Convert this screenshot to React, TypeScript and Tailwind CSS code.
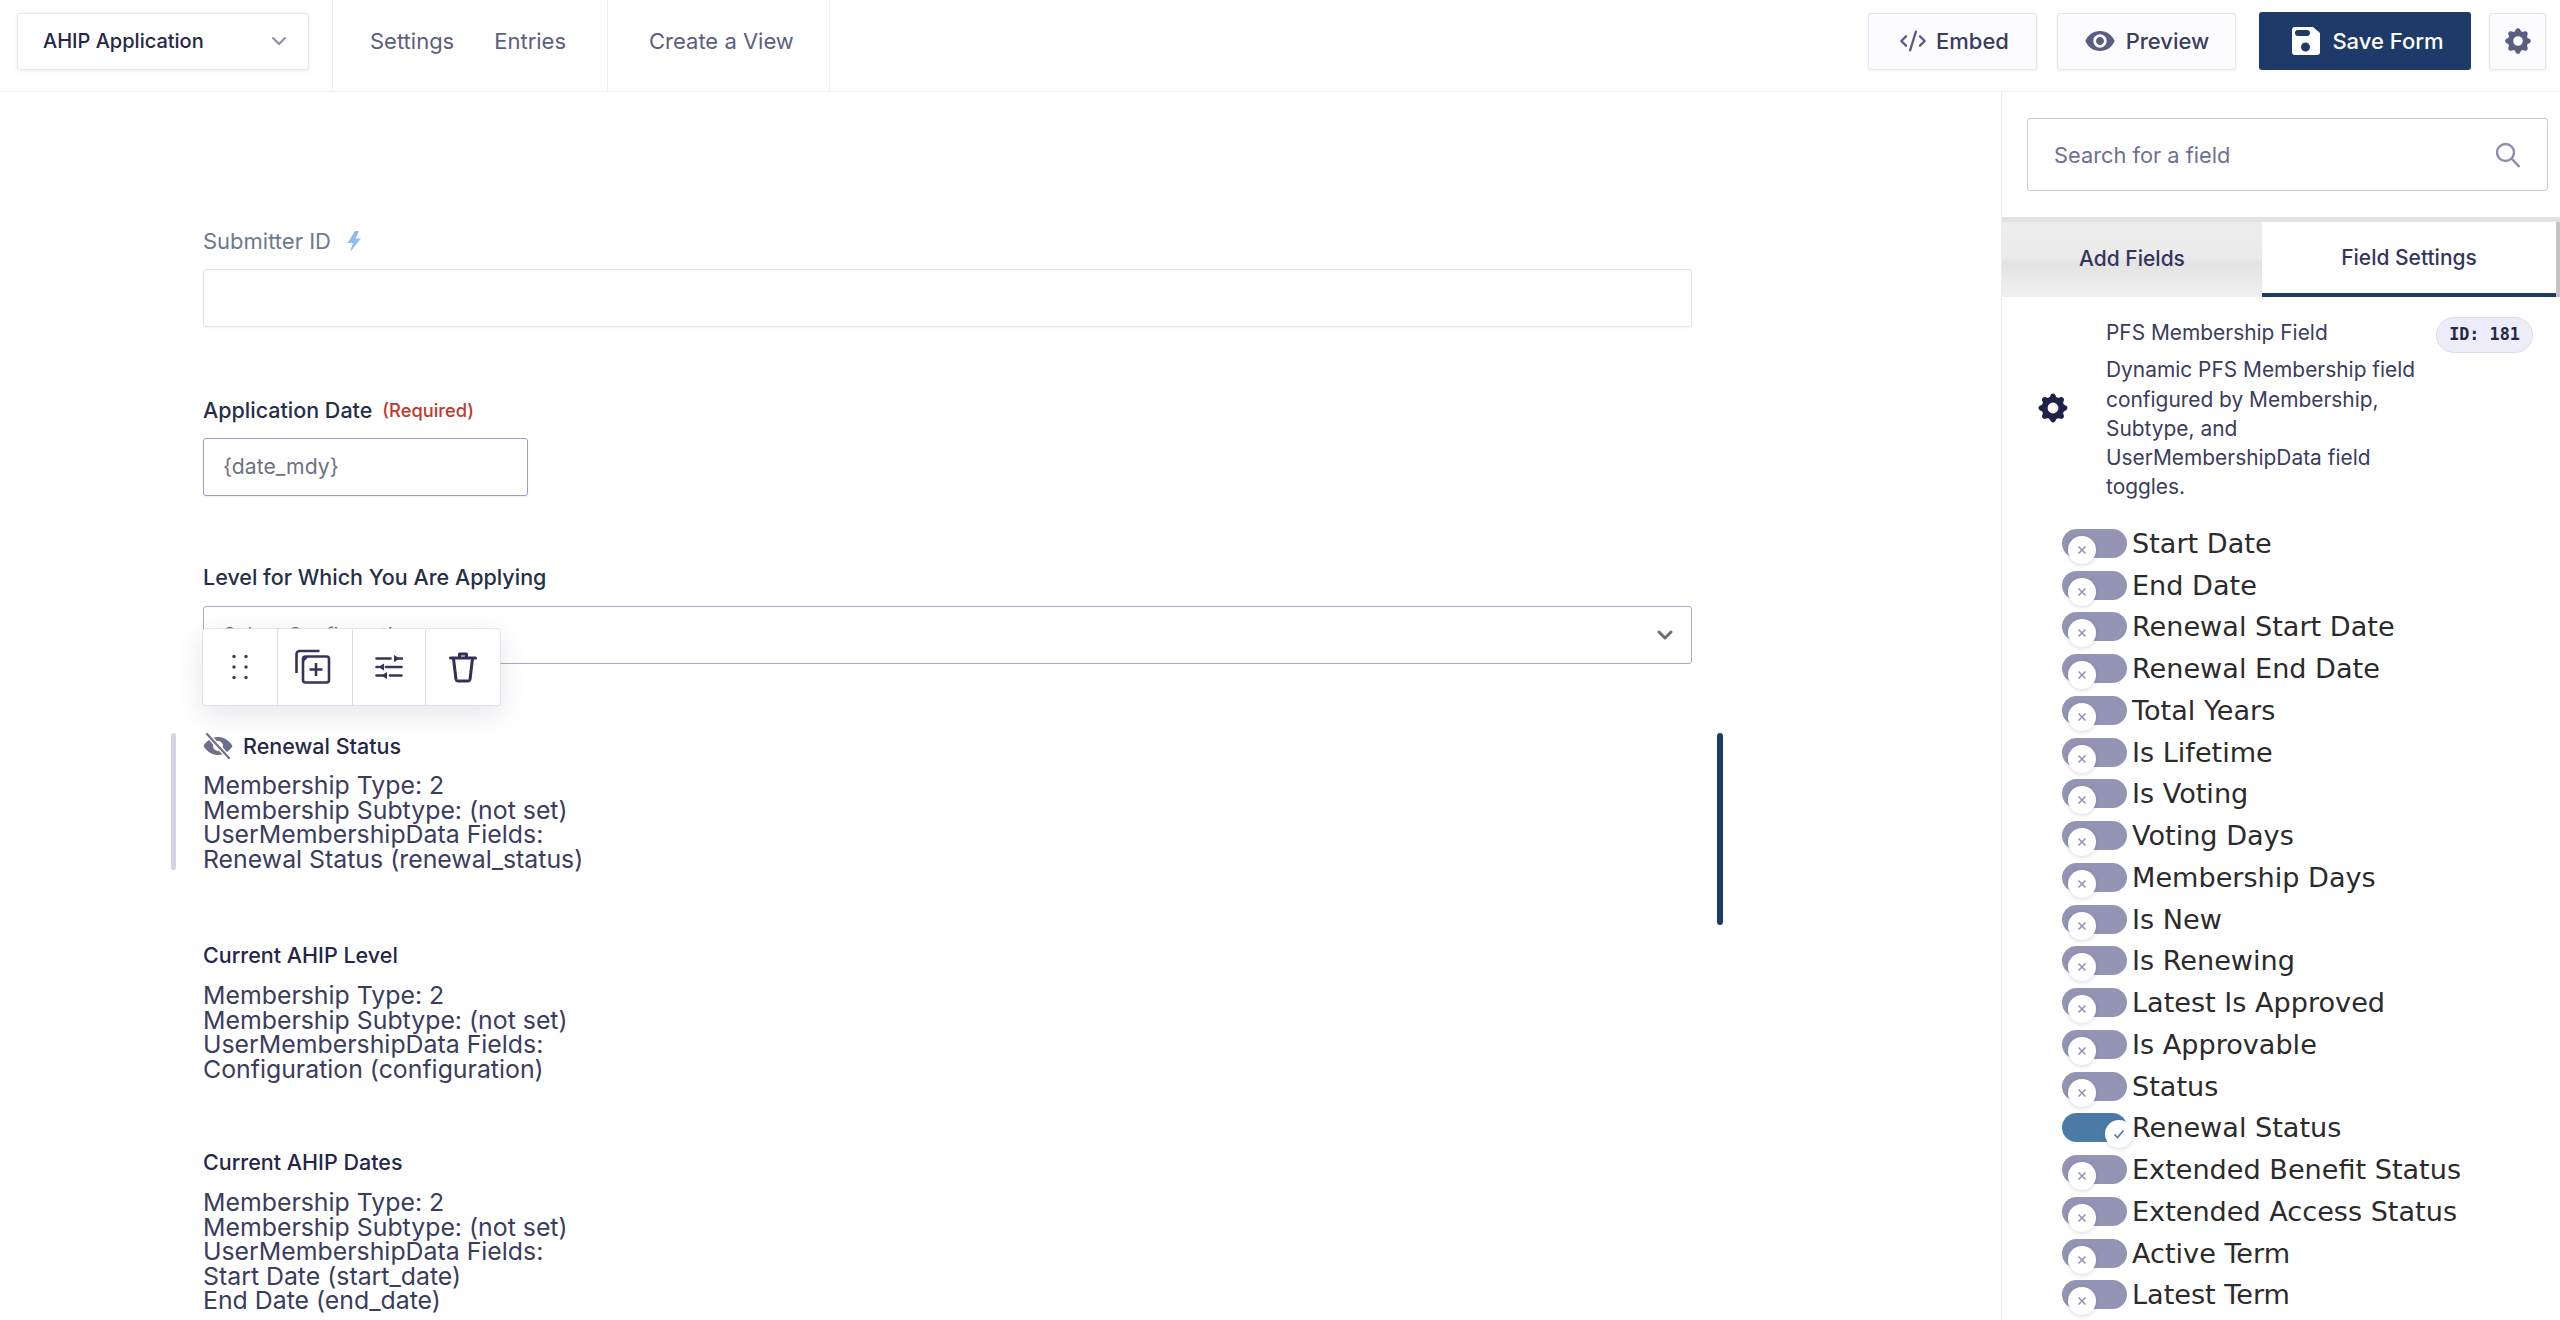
import React from "react";
import { ChevronDown, CodeXml } from "lucide-react";
import { MdVisibility } from "react-icons/md";
import { HiCog } from "react-icons/hi";

const toggles = ["Start Date","End Date","Renewal Start Date","Renewal End Date","Total Years","Is Lifetime","Is Voting","Voting Days","Membership Days","Is New","Is Renewing","Latest Is Approved","Is Approvable","Status","Renewal Status","Extended Benefit Status","Extended Access Status","Active Term","Latest Term"];

function Toggle({ label }: { label: string }) {
  const on = label === "Renewal Status";
  return (
    <div className="flex h-[41.75px] shrink-0 items-start pl-[60px]">
      <div className={`relative h-[29px] w-[65px] shrink-0 rounded-full ${on ? "bg-[#4a7ba6]" : "bg-[#9494b4]"}`}>
        <div className={`absolute top-[7px] flex h-[28px] w-[28px] items-center justify-center rounded-full bg-white shadow-[0_1px_4px_rgba(60,60,100,0.2)] ${on ? "left-[43px]" : "left-[6px]"}`}>
          {on ? (
            <svg width="14" height="14" viewBox="0 0 14 14" fill="none" stroke="#4a7ba6" strokeWidth="1.6"><path d="M2.5 7.5 5.5 10.5 11.5 3.5" /></svg>
          ) : (
            <svg width="12" height="12" viewBox="0 0 12 12" fill="none" stroke="#9494b4" strokeWidth="1.6"><path d="M2.5 2.5 9.5 9.5M9.5 2.5 2.5 9.5" /></svg>
          )}
        </div>
      </div>
      <span className="ml-[5px] whitespace-nowrap font-['DejaVu_Sans'] text-[27.1px] leading-[29px] text-[#2b2b2b]">{label}</span>
    </div>
  );
}

function Info({ title, lines, className = "" }: { title: string; lines: string[]; className?: string }) {
  return (
    <div className={className}>
      <div className="text-[21.5px] leading-[28px] font-medium text-[#242748]">{title}</div>
      <div className="mt-[14px] text-[24.85px] leading-[24.5px] text-[#3a3d5c]">
        {lines.map((l) => <div key={l}>{l}</div>)}
      </div>
    </div>
  );
}

const mt = "Membership Type: 2";
const ms = "Membership Subtype: (not set)";
const um = "UserMembershipData Fields:";

export default function App() {
  return (
    <div className="flex h-[1320px] w-[2560px] flex-col overflow-hidden bg-white font-['Inter',sans-serif] text-[#242748]">
      <header className="flex h-[92px] shrink-0 border-b border-[#ecedf8]">
        <div className="flex w-[333px] items-center border-r border-[#ecedf8] pb-[9px] pl-[17px]">
          <div className="flex h-[57px] w-[292px] items-center justify-between rounded-[3px] border border-[#e4e5f2] pl-[25px] pr-[17px] shadow-[0_1px_4px_rgba(40,40,90,0.08)]">
            <span className="text-[20px] font-medium text-[#242748]">AHIP Application</span>
            <ChevronDown size={24} strokeWidth={2} className="text-[#8c8ea8]" />
          </div>
        </div>
        <div className="flex w-[275px] items-center gap-[40px] border-r border-[#ecedf8] pb-[9px] pl-[37px] text-[22px] text-[#5c5e80]">
          <span>Settings</span><span>Entries</span>
        </div>
        <div className="flex w-[222px] items-center border-r border-[#ecedf8] pb-[9px] pl-[41px] text-[22px] text-[#5c5e80]">Create a View</div>
        <div className="flex flex-1 items-center justify-end pb-[9px] pr-[14px]">
          <button className="flex h-[57px] w-[169px] items-center justify-center gap-[9px] rounded-[3px] border border-[#e4e5f2] bg-[#fcfcff] pl-[3px] text-[22px] font-medium text-[#3a3d5c] shadow-[0_1px_3px_rgba(40,40,90,0.06)]">
            <CodeXml size={28} strokeWidth={2} className="text-[#5c5e80]" />Embed
          </button>
          <button className="ml-[20px] flex h-[57px] w-[179px] items-center justify-center gap-[10px] rounded-[3px] border border-[#e4e5f2] bg-[#fcfcff] text-[22px] font-medium text-[#3a3d5c] shadow-[0_1px_3px_rgba(40,40,90,0.06)]">
            <MdVisibility size={32} className="text-[#5c5e80]" />Preview
          </button>
          <button className="ml-[23px] flex h-[58px] w-[212px] items-center justify-center gap-[12px] rounded-[3px] bg-[#1e3a68] pl-[6px] text-[22px] font-medium text-white">
            <svg width="28" height="28" viewBox="0 0 28 28"><path fillRule="evenodd" fill="#fff" d="M3 0h18l7 6v19a3 3 0 0 1-3 3H3a3 3 0 0 1-3-3V3a3 3 0 0 1 3-3Zm3 3a2.500 2.500 0 0 0 0 6h9a3 3 0 0 0 0-6Zm7.500 12.500a4.500 4.500 0 1 0 0 9 4.500 4.500 0 0 0 0-9Z" /></svg>
            Save Form
          </button>
          <button className="ml-[18px] flex h-[57px] w-[57px] items-center justify-center rounded-[3px] border border-[#e4e5f2] bg-[#fcfcff] shadow-[0_1px_3px_rgba(40,40,90,0.06)]">
            <HiCog size={32} className="text-[#5c5e80]" />
          </button>
        </div>
      </header>
      <div className="flex min-h-0 flex-1">
        <main className="relative w-[2001px] shrink-0 overflow-hidden pl-[203px] pt-[135px]">
          <div className="w-[1489px]">
            <div className="flex items-center text-[22px] leading-[28px] text-[#6b7a8f]">
              Submitter ID
              <svg width="15" height="21" viewBox="0 0 15 21" fill="#8dbde8" className="ml-[16px]"><path d="M8 0 0.500 12h5.500L3 21 14 7.500H8.500L12 0Z" /></svg>
            </div>
            <div className="mt-[14px] h-[58px] rounded-[3px] border border-[#e0e1f0] shadow-[0_1px_2px_rgba(40,40,90,0.06)]" />
            <div className="mt-[69px] flex items-center text-[21.5px] leading-[28px] font-medium text-[#242f48]">
              Application Date<span className="ml-[10px] text-[18.3px] font-medium text-[#c0392b]">(Required)</span>
            </div>
            <div className="mt-[14px] flex h-[58px] w-[325px] items-center rounded-[3px] border border-[#9e9fc0] pl-[19px] text-[21.2px] text-[#6e7182] shadow-[0_1px_2px_rgba(40,40,90,0.08)]">{"{date_mdy}"}</div>
            <div className="mt-[67px] text-[21.5px] leading-[28px] font-medium text-[#242f48]">Level for Which You Are Applying</div>
            <div className="mt-[15px] flex h-[58px] items-center justify-between rounded-[3px] border border-[#aaaac6] pl-[19px] pr-[14px] text-[20px] text-[#6e7182]">
              <span>Select Configuration</span>
              <ChevronDown size={24} strokeWidth={3} className="text-[#6b6d78]" />
            </div>
          </div>
          <div className="absolute left-[203px] top-[537px] z-10 flex h-[76px] w-[297px] rounded-[3px] bg-white shadow-[0_0_0_1px_rgba(220,220,240,0.7),0_8px_28px_rgba(50,50,100,0.13)]">
            <div className="flex w-[75px] items-center justify-center border-r border-[#dcdcee]">
              <svg width="16" height="26" viewBox="0 0 16 26" fill="#3a3d5c"><circle cx="2" cy="2.500" r="1.700" /><circle cx="14" cy="2.500" r="1.700" /><circle cx="2" cy="13" r="1.700" /><circle cx="14" cy="13" r="1.700" /><circle cx="2" cy="23.500" r="1.700" /><circle cx="14" cy="23.500" r="1.700" /></svg>
            </div>
            <div className="flex w-[75px] items-center justify-center border-r border-[#dcdcee] pr-[4px]">
              <svg width="36" height="36" viewBox="0 0 36 36" fill="none" stroke="#33365a" strokeWidth="2.600"><rect x="8" y="7.500" width="26" height="26" rx="2.500" /><path d="M1.500 24V5a3 3 0 0 1 3-3h20" /><path d="M21 14v13M14.500 20.500h13" /><path d="M8 7.500h6l-6 6Z" fill="#33365a" stroke="none" /></svg>
            </div>
            <div className="flex w-[73px] items-center justify-center border-r border-[#dcdcee]">
              <svg width="28" height="24" viewBox="0 0 28 24" fill="none" stroke="#33365a" strokeWidth="2.600" strokeLinecap="round"><path d="M1.500 3.500h14M24 3.500h3M1.500 12h2M11 12h15.500M1.500 20.500h6M15 20.500h11.500" /><path d="M19 0v7l6-3.500ZM9 8.500v7l-6-3.500ZM12 17v7l-6-3.500Z" fill="#33365a" stroke="none" /></svg>
            </div>
            <div className="flex flex-1 items-center justify-center">
              <svg width="28" height="31" viewBox="0 0 28 31" fill="none" stroke="#2f3255" strokeWidth="3" strokeLinejoin="round" strokeLinecap="round"><path d="M1.500 6h25" /><path d="M10.500 5V2h7v3" /><path d="M4.500 6.500l2.500 21a2 2 0 0 0 2 1.500h10a2 2 0 0 0 2-1.500l2.500-21" /></svg>
            </div>
          </div>
          <div className="relative mt-[68px]">
            <div className="absolute -left-[32px] top-[1px] h-[137px] w-[5px] rounded-full bg-[#d3d4e8]" />
            <div className="absolute left-[1514px] top-[1px] h-[192px] w-[6px] rounded-full bg-[#1e3a68]" />
            <div className="flex items-center gap-[10px] text-[21.5px] leading-[28px] font-medium text-[#242748]">
              <svg width="30" height="26" viewBox="0 0 30 26" className="shrink-0">
                <path fillRule="evenodd" fill="#6e6f88" d="M15 4C8 4 2.500 9 0.500 13 2.500 17 8 22 15 22s12.500-5 14.500-9C27.500 9 22 4 15 4Zm0 4a5 5 0 1 1 0 10 5 5 0 0 1 0-10Z" />
                <path d="M3 0 27 26" stroke="#fff" strokeWidth="5" />
                <path d="M4 1 26 25" stroke="#6e6f88" strokeWidth="2.200" strokeLinecap="round" />
              </svg>
              Renewal Status
            </div>
            <div className="mt-[13px] text-[24.85px] leading-[24.5px] text-[#3a3d5c]">
              <div>{mt}</div><div>{ms}</div><div>{um}</div><div>Renewal Status (renewal_status)</div>
            </div>
          </div>
          <Info className="mt-[70px]" title="Current AHIP Level" lines={[mt, ms, um, "Configuration (configuration)"]} />
          <Info className="mt-[67px]" title="Current AHIP Dates" lines={[mt, ms, um, "Start Date (start_date)", "End Date (end_date)"]} />
        </main>
        <aside className="flex w-[559px] shrink-0 flex-col overflow-hidden border-l border-[#ebebf6]">
          <div className="-mt-[1px] border-t border-[#cfcfd4] pb-[26px] pl-[25px] pr-[12px] pt-[26px]">
            <div className="flex h-[73px] w-[521px] items-center justify-between rounded-[3px] border border-[#c8c9de] pl-[26px] pr-[26px] text-[21.8px] text-[#6e7092]">
              <span className="pt-[2px]">Search for a field</span>
              <svg width="26" height="26" viewBox="0 0 26 26" fill="none" stroke="#8a8cab" strokeWidth="2.400"><circle cx="10.500" cy="10.500" r="8.500" /><path d="M16.500 16.500 24.500 25" /></svg>
            </div>
          </div>
          <div className="flex h-[80px] shrink-0 border-t-[5px] border-[#e2e2e2] bg-[linear-gradient(180deg,#ededed_0%,#ebebeb_45%,#e3e3e3_55%,#f0f0f0_100%)] text-[21px] font-medium">
            <div className="flex w-[260px] items-center justify-center pb-[2px] text-[#33365a]">Add Fields</div>
            <div className="flex w-[294px] items-center justify-center border-b-[4px] border-[#1e3a68] bg-white text-[#33365a]">Field Settings</div>
            <div className="w-[4px] bg-[#c4c4c4]" />
          </div>
          <div className="relative flex pl-[104px] pr-[20px] pt-[21px]">
            <HiCog size={36} className="absolute left-[33px] top-[93px] text-[#1f2247]" />
            <div className="w-[325px] text-[20.9px] leading-[29.3px] text-[#3a3d5c]">
              <div className="mb-[8px]">PFS Membership Field</div>
              Dynamic PFS Membership field configured by Membership, Subtype, and UserMembershipData field toggles.
            </div>
            <div className="absolute right-[27px] top-[20px] flex h-[36px] w-[97px] items-center justify-center rounded-full border border-[#dcdcee] bg-[#ecedf8] font-['DejaVu_Sans_Mono'] text-[16.800px] font-bold text-[#242748]">ID: 181</div>
          </div>
          <div className="mt-[27px] flex flex-col">
            {toggles.map((t) => <Toggle key={t} label={t} />)}
          </div>
        </aside>
      </div>
    </div>
  );
}
